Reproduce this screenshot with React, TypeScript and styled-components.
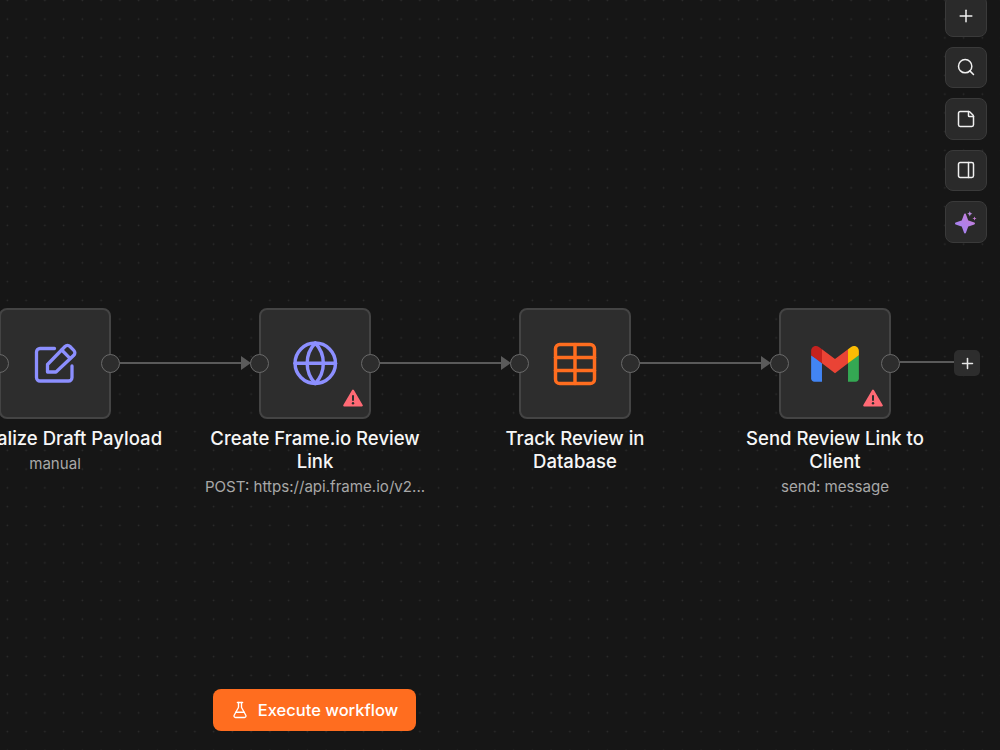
import React from "react";
import styled, { createGlobalStyle } from "styled-components";
import { Plus, Search, StickyNote, PanelRight, FlaskConical, Globe, Table } from "lucide-react";

const Global = createGlobalStyle`
  html, body { margin: 0; padding: 0; height: 100%; background: #161616; overflow: hidden; }
  #root { height: 100%; }
  * { box-sizing: border-box; }
`;

const Canvas = styled.div`
  position: relative;
  width: 1000px;
  height: 750px;
  overflow: hidden;
  background-color: #161616;
  background-image: radial-gradient(circle, #2e2e2e 0.7px, transparent 1.1px);
  background-size: 18.75px 18.75px;
  background-position: -2px -9px;
  font-family: Inter, "Liberation Sans", sans-serif;
  color: #f0f0f0;
`;

const Toolbar = styled.div`
  position: absolute;
  top: -5px;
  left: 945px;
  display: flex;
  flex-direction: column;
  gap: 10px;
`;

const ToolButton = styled.button`
  width: 41.5px;
  height: 41.5px;
  padding: 0;
  display: flex;
  align-items: center;
  justify-content: center;
  background: #2a2a2a;
  border: 1px solid #3a3a3a;
  border-radius: 8px;
  color: #f0f0f0;
`;

const NodeWrap = styled.div<{ $x: number }>`
  position: absolute;
  left: ${(p) => p.$x}px;
  top: 308px;
  width: 112px;
`;

const NodeBox = styled.div`
  position: relative;
  width: 112px;
  height: 111px;
  display: flex;
  align-items: center;
  justify-content: center;
  background: #2d2d2d;
  border: 2px solid #444;
  border-radius: 8px;
`;

const Handle = styled.span<{ $side: "left" | "right" }>`
  position: absolute;
  top: 44px;
  ${(p) => (p.$side === "left" ? "left: -11.5px;" : "right: -11px;")}
  width: 19px;
  height: 19px;
  border-radius: 50%;
  background: #2d2d2d;
  border: 1.5px solid #6a6a6a;
`;

const Warning = styled.svg`
  position: absolute;
  right: 6px;
  bottom: 10px;
  width: 20px;
  height: 18px;
`;

const Label = styled.div`
  position: absolute;
  top: 119px;
  left: 50%;
  transform: translateX(-50%);
  width: 222px;
  display: flex;
  flex-direction: column;
  align-items: center;
  text-align: center;
`;

const Title = styled.div`
  font-size: 18.55px;
  font-weight: 450;
  line-height: 23.4px;
  color: #f6f6f6;
`;

const Subtitle = styled.div`
  margin-top: 3.5px;
  font-size: 15.1px;
  line-height: 20px;
  color: #a8a8a8;
  white-space: nowrap;
`;

const Edges = styled.svg`
  position: absolute;
  inset: 0;
  width: 1000px;
  height: 750px;
`;

const AddButton = styled.div`
  position: absolute;
  left: 954px;
  top: 350px;
  width: 26px;
  height: 26px;
  display: flex;
  align-items: center;
  justify-content: center;
  background: #2d2d2d;
  border-radius: 5px;
  color: #e8e8e8;
`;

const Execute = styled.button`
  position: absolute;
  left: 213px;
  top: 689px;
  width: 203px;
  height: 42px;
  display: flex;
  align-items: center;
  justify-content: center;
  gap: 9px;
  padding: 0;
  background: #ff6d1f;
  border: none;
  border-radius: 8px;
  color: #fff;
  font-family: inherit;
  font-size: 16.5px;
  font-weight: 450;
`;

const Sparkle = () => (
  <svg width="24" height="24" viewBox="0 0 24 24">
    <defs>
      <linearGradient id="sp" x1="0" y1="1" x2="1" y2="0">
        <stop offset="0" stopColor="#9f83f5" />
        <stop offset="1" stopColor="#c77dd8" />
      </linearGradient>
    </defs>
    <path d="M11 4.5L13.4 11.1L20 13.5L13.4 15.9L11 22.5L8.6 15.9L2 13.5L8.6 11.1Z" fill="url(#sp)" stroke="url(#sp)" strokeWidth="2" strokeLinejoin="round" />
    <path d="M15.8 1.2L16.6 3L18.4 3.8L16.6 4.6L15.8 6.4L15 4.6L13.2 3.8L15 3Z" fill="#b98be0" />
    <path d="M20.5 6.4L21.1 7.9L22.6 8.5L21.1 9.1L20.5 10.6L19.9 9.1L18.4 8.5L19.9 7.9Z" fill="#c77dd8" />
  </svg>
);

const PenIcon = () => (
  <svg width="46" height="46" viewBox="0 0 46 46" fill="none" stroke="#8c8fff" strokeWidth="3.3" strokeLinejoin="round" strokeLinecap="round">
    <path d="M22.5 7.5H8a3.5 3.5 0 0 0-3.5 3.5V36.5a3.5 3.5 0 0 0 3.5 3.5H36.5a3.5 3.5 0 0 0 3.5-3.5V25" />
    <path d="M15.5 31V23.5L33 5.5a3.5 3.5 0 0 1 5 0l3.8 3.8a3.5 3.5 0 0 1 0 5L24 31Z" />
    <path d="M29.7 9L38 17.3" />
  </svg>
);

const GmailIcon = () => (
  <svg width="48" height="36" viewBox="0 0 256 193">
    <path fill="#4285F4" d="M58.182 192.05V93.14L27.507 65.077 0 49.504v125.091c0 9.658 7.825 17.455 17.455 17.455h40.727Z" />
    <path fill="#34A853" d="M197.818 192.05h40.727c9.659 0 17.455-7.826 17.455-17.455V49.505l-31.156 17.837-27.026 25.798v98.91Z" />
    <path fill="#EA4335" d="m58.182 93.14-4.174-38.647 4.174-36.989L128 69.868l69.818-52.364 4.669 34.992-4.669 40.644L128 145.504z" />
    <path fill="#FBBC04" d="M197.818 17.504V93.14L256 49.504V26.231c0-21.585-24.64-33.89-41.89-20.945l-16.292 12.218Z" />
    <path fill="#C5221F" d="m0 49.504 26.759 20.07L58.182 93.14V17.504L41.89 5.286C24.61-7.66 0 4.646 0 26.23v23.273Z" />
  </svg>
);

const WarningIcon = () => (
  <Warning viewBox="0 0 20 18">
    <path d="M10 1.5 L18.8 16.5 H1.2Z" fill="#ff6a75" stroke="#ff6a75" strokeWidth="2" strokeLinejoin="round" />
    <rect x="9" y="6" width="2" height="6" rx="1" fill="#2d2d2d" />
    <circle cx="10" cy="14.3" r="1.2" fill="#2d2d2d" />
  </Warning>
);

type NodeData = {
  x: number;
  icon: React.ReactNode;
  title: string;
  subtitle?: string;
  warn?: boolean;
};

const nodes: NodeData[] = [
  { x: -1, icon: <PenIcon />, title: "Normalize Draft Payload", subtitle: "manual" },
  { x: 259, icon: <Globe size={48.5} color="#8c8fff" strokeWidth={1.7} />, title: "Create Frame.io Review Link", subtitle: "POST: https://api.frame.io/v2...", warn: true },
  { x: 519, icon: <Table size={52} color="#ff6d1f" strokeWidth={1.6} />, title: "Track Review in Database" },
  { x: 779, icon: <GmailIcon />, title: "Send Review Link to Client", subtitle: "send: message", warn: true },
];

export default function App() {
  return (
    <Canvas>
      <Global />
      <Edges viewBox="0 0 1000 750">
        {[120, 380, 640].map((x) => (
          <g key={x}>
            <path d={`M${x} 363H${x + 123}`} stroke="#5a5a5a" strokeWidth="2" />
            <path d={`M${x + 121} 356L${x + 131} 363L${x + 121} 370Z`} fill="#5a5a5a" />
          </g>
        ))}
        <path d="M900 362H955" stroke="#5a5a5a" strokeWidth="2" />
      </Edges>
      {nodes.map((n) => (
        <NodeWrap key={n.x} $x={n.x}>
          <NodeBox>
            {n.icon}
            <Handle $side="left" />
            <Handle $side="right" />
            {n.warn && <WarningIcon />}
          </NodeBox>
          <Label>
            <Title>{n.title}</Title>
            {n.subtitle && <Subtitle>{n.subtitle}</Subtitle>}
          </Label>
        </NodeWrap>
      ))}
      <AddButton>
        <Plus size={17} strokeWidth={2.2} />
      </AddButton>
      <Toolbar>
        <ToolButton><Plus size={20} strokeWidth={1.8} /></ToolButton>
        <ToolButton><Search size={20} strokeWidth={1.8} /></ToolButton>
        <ToolButton><StickyNote size={20} strokeWidth={1.8} /></ToolButton>
        <ToolButton><PanelRight size={20} strokeWidth={1.8} /></ToolButton>
        <ToolButton><Sparkle /></ToolButton>
      </Toolbar>
      <Execute>
        <FlaskConical size={18} strokeWidth={1.8} />
        Execute workflow
      </Execute>
    </Canvas>
  );
}
